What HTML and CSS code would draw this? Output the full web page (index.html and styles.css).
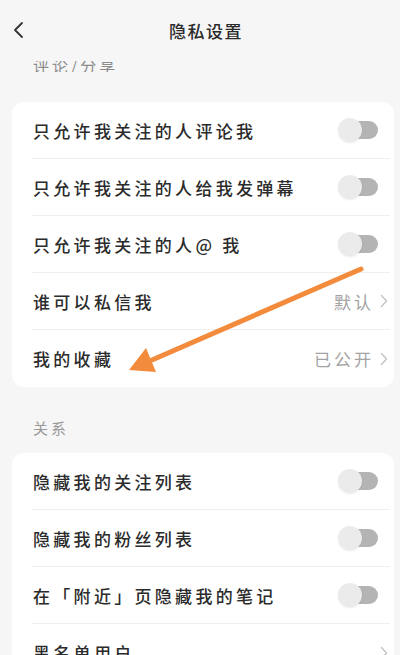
FILE: index.html
```html
<!DOCTYPE html>
<html lang="zh">
<head>
<meta charset="utf-8">
<link rel="stylesheet" href="styles.css">
</head>
<body>
<div class="page">
  <header class="topbar">
    <div class="back">
      <svg width="12" height="18" viewBox="0 0 12 18"><path d="M9 2 L2 9 L9 16" fill="none" stroke="#333" stroke-width="1.8" stroke-linecap="round" stroke-linejoin="round"/></svg>
    </div>
    <div class="title">隐私设置</div>
    <div class="spacer"></div>
  </header>

  <div class="label-cut"><span>评论/分享</span></div>

  <section class="card">
    <div class="row"><span class="text">只允许我关注的人评论我</span><span class="toggle"></span></div>
    <div class="row"><span class="text">只允许我关注的人给我发弹幕</span><span class="toggle"></span></div>
    <div class="row"><span class="text">只允许我关注的人@ 我</span><span class="toggle"></span></div>
    <div class="row link"><span class="text">谁可以私信我</span><span class="value">默认<svg class="chev" width="8" height="14" viewBox="0 0 8 14"><path d="M1.5 1.5 L6.5 7 L1.5 12.5" fill="none" stroke="#c4c4c4" stroke-width="1.4" stroke-linecap="round" stroke-linejoin="round"/></svg></span></div>
    <div class="row link last"><span class="text">我的收藏</span><span class="value">已公开<svg class="chev" width="8" height="14" viewBox="0 0 8 14"><path d="M1.5 1.5 L6.5 7 L1.5 12.5" fill="none" stroke="#c4c4c4" stroke-width="1.4" stroke-linecap="round" stroke-linejoin="round"/></svg></span></div>
  </section>

  <div class="label">关系</div>

  <section class="card">
    <div class="row"><span class="text">隐藏我的关注列表</span><span class="toggle"></span></div>
    <div class="row"><span class="text">隐藏我的粉丝列表</span><span class="toggle"></span></div>
    <div class="row"><span class="text">在「附近」页隐藏我的笔记</span><span class="toggle"></span></div>
    <div class="row link last"><span class="text">黑名单用户</span><span class="value"><svg class="chev" width="8" height="14" viewBox="0 0 8 14"><path d="M1.5 1.5 L6.5 7 L1.5 12.5" fill="none" stroke="#c4c4c4" stroke-width="1.4" stroke-linecap="round" stroke-linejoin="round"/></svg></span></div>
  </section>

  <svg class="arrow" width="400" height="655" viewBox="0 0 400 655">
    <line x1="361" y1="269" x2="152" y2="360" stroke="#f28b3c" stroke-width="5" stroke-linecap="round"/>
    <polygon points="129,370 156,372 146,348" fill="#f28b3c"/>
  </svg>
</div>
</body>
</html>
```

FILE: styles.css
```css
html, body {
  margin: 0;
  padding: 0;
}
body {
  background: #f6f6f6;
  font-family: "Noto Sans CJK SC", "Noto Sans", sans-serif;
  color: #2b2b2b;
}
.page {
  position: relative;
  width: 400px;
  height: 655px;
  overflow: hidden;
  background: #f6f6f6;
}
.topbar {
  height: 60px;
  display: flex;
  align-items: center;
  box-sizing: border-box;
}
.back {
  width: 60px;
  padding-left: 13px;
  box-sizing: border-box;
  display: flex;
  align-items: center;
}
.title {
  flex: 1;
  text-align: center;
  font-size: 17px;
  letter-spacing: 1.5px;
  font-weight: 500;
  color: #2a2a2a;
  padding-left: 12px;
}
.spacer {
  width: 60px;
}
.label-cut {
  height: 11px;
  margin-top: 1px;
  overflow: hidden;
  display: flex;
  align-items: flex-end;
  padding-left: 33px;
  margin-bottom: 30px;
}
.label-cut span {
  font-size: 16px;
  line-height: 16px;
  color: #8c8c8c;
  letter-spacing: 3px;
  margin-bottom: -1px;
}
.label {
  padding: 32px 0 16px 33px;
  font-size: 15px;
  line-height: 18px;
  color: #999;
  letter-spacing: 3px;
}
.card {
  background: #fff;
  margin: 0 6px 0 12px;
  border-radius: 12px;
  padding-left: 20px;
}
.row {
  height: 57px;
  box-sizing: border-box;
  display: flex;
  align-items: center;
  justify-content: space-between;
  border-bottom: 1px solid #efefef;
  margin-right: 4px;
  padding-right: 12px;
}
.row.last {
  border-bottom: none;
}
.row.link {
  padding-right: 2px;
}
.text {
  font-size: 17px;
  font-weight: 500;
  letter-spacing: 3.3px;
  color: #2b2b2b;
  padding-left: 1px;
}
.value {
  display: flex;
  align-items: center;
  font-size: 17px;
  letter-spacing: 3px;
  color: #a3a3a3;
}
.chev {
  margin-left: 6px;
}
.toggle {
  position: relative;
  width: 40px;
  height: 24px;
}
.toggle::before {
  content: "";
  position: absolute;
  left: 6px;
  top: 3px;
  width: 34px;
  height: 18px;
  border-radius: 9px;
  background: #b4b4b4;
}
.toggle::after {
  content: "";
  position: absolute;
  left: 0;
  top: 0;
  width: 24px;
  height: 24px;
  border-radius: 50%;
  background: #ebebeb;
  box-shadow: 0 1px 2px rgba(0,0,0,0.08);
}
.arrow {
  position: absolute;
  left: 0;
  top: 0;
  pointer-events: none;
}
```
